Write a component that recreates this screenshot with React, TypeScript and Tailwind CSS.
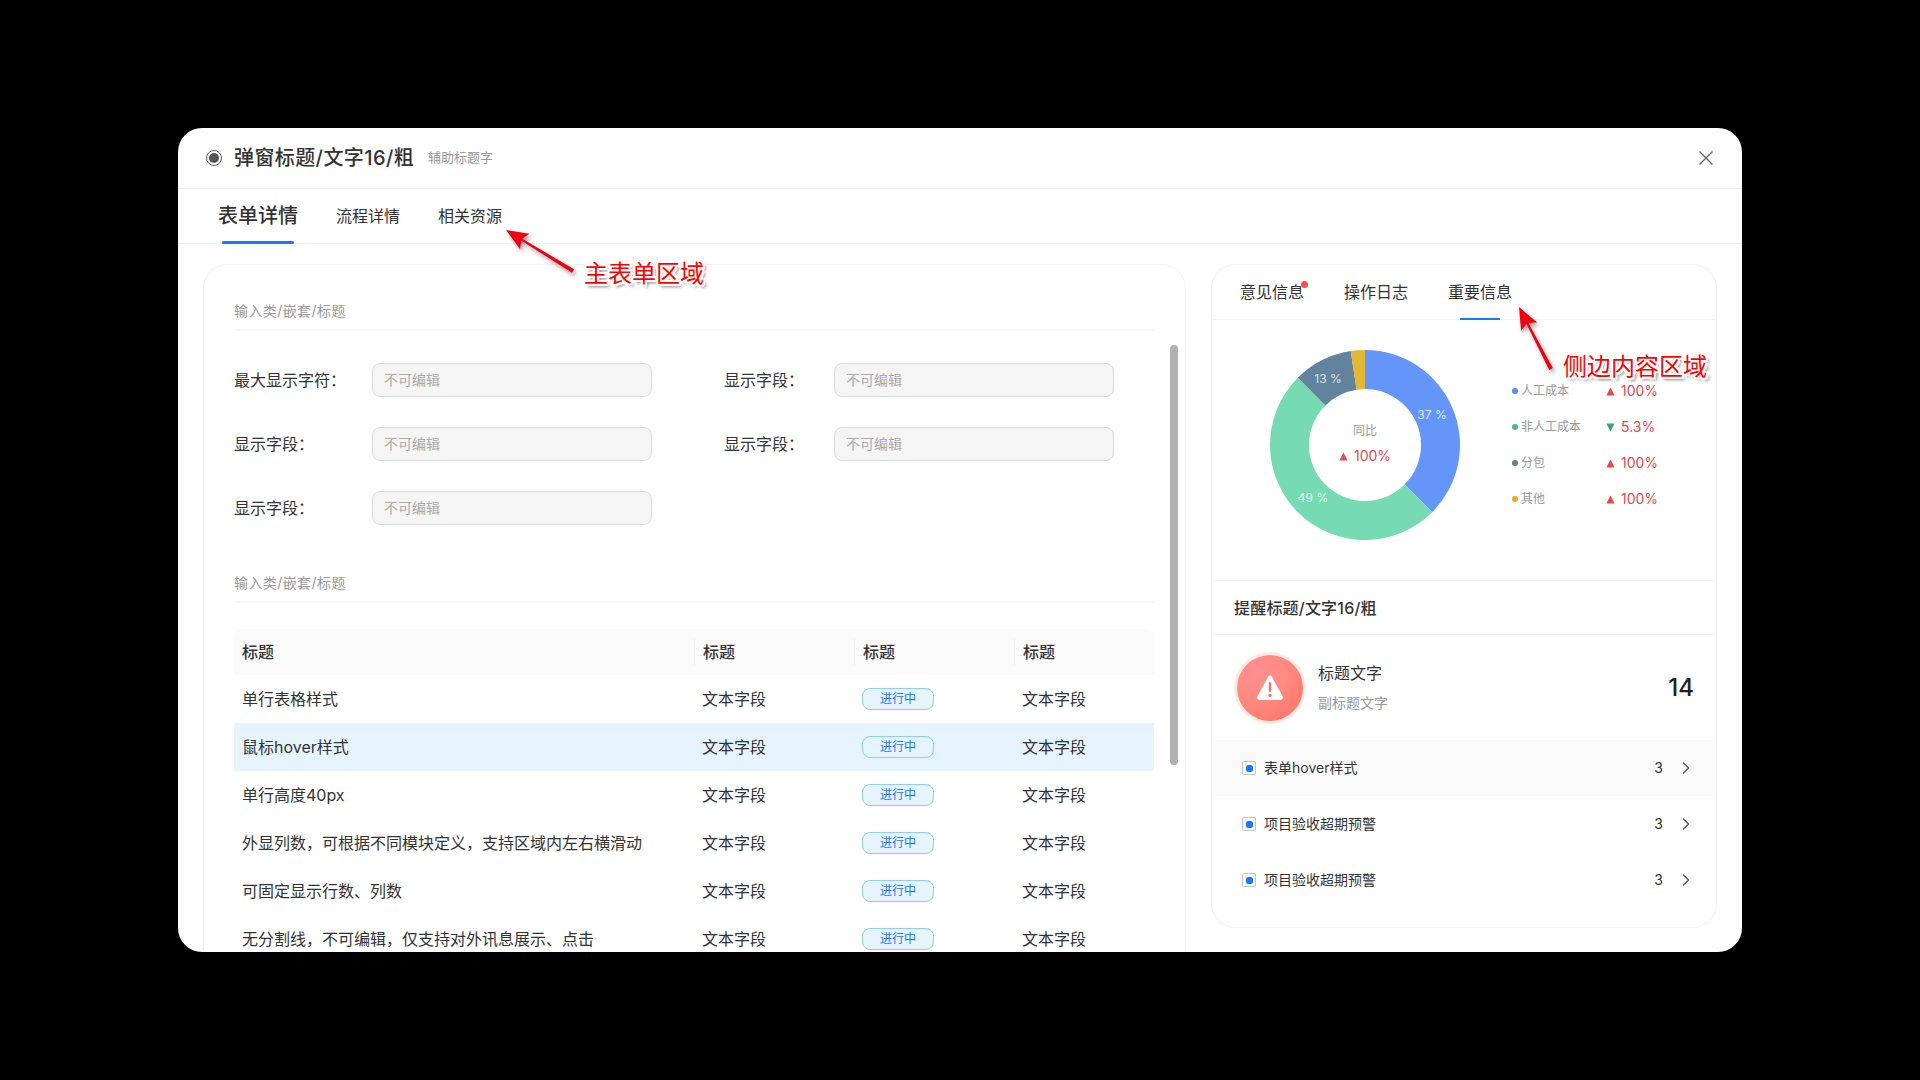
import { ChevronRight } from 'lucide-react';

const FONT = "font-['Inter','Noto_Sans_CJK_SC',sans-serif]";

const rows = [
  '单行表格样式',
  '鼠标hover样式',
  '单行高度40px',
  '外显列数\uFF0C可根据不同模块定义\uFF0C支持区域内左右横滑动',
  '可固定显示行数、列数',
  '无分割线\uFF0C不可编辑\uFF0C仅支持对外讯息展示、点击',
];

const legend = [
  { name: '人工成本', dot: 'bg-[#4f8ff7]', value: '100%', up: true },
  { name: '非人工成本', dot: 'bg-[#4fb98a]', value: '5.3%', up: false },
  { name: '分包', dot: 'bg-[#5d7f97]', value: '100%', up: true },
  { name: '其他', dot: 'bg-[#f5a623]', value: '100%', up: true },
];

// donut slice between two fractions of the circle, starting at 12 o'clock
function slice(from: number, to: number, R = 95, r = 56, c = 95) {
  const pt = (f: number, rad: number) => {
    const a = f * 2 * Math.PI;
    return `${(c + rad * Math.sin(a)).toFixed(2)} ${(c - rad * Math.cos(a)).toFixed(2)}`;
  };
  const large = to - from > 0.5 ? 1 : 0;
  return `M${pt(from, R)} A${R} ${R} 0 ${large} 1 ${pt(to, R)} L${pt(to, r)} A${r} ${r} 0 ${large} 0 ${pt(from, r)} Z`;
}

function Tri({ up = true }: { up?: boolean }) {
  return (
    <svg width="9" height="9" viewBox="0 0 9 9" className="shrink-0">
      {up ? <path d="M4.5 0.5 L8.6 8.5 L0.4 8.5 Z" fill="#e5484d" /> : <path d="M0.4 0.5 L8.6 0.5 L4.5 8.5 Z" fill="#3aa76d" />}
    </svg>
  );
}

function SectionTitle({ text, className }: { text: string; className?: string }) {
  return (
    <div className={`h-[34px] border-b-2 border-[#f7f7fb] text-sm leading-7 tracking-[0.4px] text-[#999] ${className ?? ''}`}>{text}</div>
  );
}

function Field({ label, width }: { label: string; width: string }) {
  return (
    <div className="flex h-[34px] items-center">
      <div className={`${width} text-base text-[#333]`}>{label}{'\uFF1A'}</div>
      <div className="flex h-[34px] w-[280px] items-center rounded-lg border border-[#dcdcdc] bg-[#f5f5f5] px-[11px] text-sm text-[#aaa]">
        不可编辑
      </div>
    </div>
  );
}

function AlertRow({ text, hover }: { text: string; hover?: boolean }) {
  return (
    <div className={`flex h-14 items-center pl-[30px] pr-5 text-sm text-[#333] ${hover ? 'bg-[#fafafa]' : ''}`}>
      <div className="flex h-[14px] w-[14px] items-center justify-center rounded-[2px] border border-[#c4c4cc] bg-white">
        <div className="h-[7px] w-[7px] rounded-[2.5px] bg-[#1677ff]" />
      </div>
      <div className="ml-2 flex-1">{text}</div>
      <div className="mr-[13px]">3</div>
      <ChevronRight size={20} strokeWidth={1.5} className="text-[#555]" />
    </div>
  );
}

function Callout({ className, children }: { className: string; children: string }) {
  return (
    <div
      className={`absolute whitespace-nowrap text-2xl leading-8 text-[#ff0000] [text-shadow:1px_0_0_#fff,-1px_0_0_#fff,0_1px_0_#fff,0_-1px_0_#fff,2px_2px_0_#fff,-2px_-2px_0_#fff,2px_-2px_0_#fff,-2px_2px_0_#fff,2px_0_0_#fff,-2px_0_0_#fff,0_2px_0_#fff,0_-2px_0_#fff,3px_3px_3px_rgba(0,0,0,0.55),0_0_4px_rgba(0,0,0,0.3)] ${className}`}
    >
      {children}
    </div>
  );
}

function Arrow({ x1, y1, x2, y2 }: { x1: number; y1: number; x2: number; y2: number }) {
  // coordinates are dialog-relative; the arrow head sits at x2,y2
  const a = Math.atan2(y2 - y1, x2 - x1);
  const len = 22;
  const wing = 9;
  const bx = x2 - len * Math.cos(a);
  const by = y2 - len * Math.sin(a);
  const nx = -Math.sin(a);
  const ny = Math.cos(a);
  const nb = `${bx + 4 * Math.cos(a)},${by + 4 * Math.sin(a)}`;
  const head = `${x2},${y2} ${bx + nx * wing},${by + ny * wing} ${nb} ${bx - nx * wing},${by - ny * wing}`;
  return (
    <g className="drop-shadow-[2px_3px_2px_rgba(0,0,0,0.4)]">
      <polygon
        points={`${x1 + nx * 2},${y1 + ny * 2} ${x1 - nx * 2},${y1 - ny * 2} ${bx + 6 * Math.cos(a) - nx},${by + 6 * Math.sin(a) - ny} ${bx + 6 * Math.cos(a) + nx},${by + 6 * Math.sin(a) + ny}`}
        fill="#f00011"
      />
      <polygon points={head} fill="#f00011" />
    </g>
  );
}

export default function App() {
  return (
    <div className={`flex h-screen w-full items-center justify-center bg-black ${FONT}`}>
      <div className="relative flex h-[824px] w-[1564px] flex-col overflow-hidden rounded-3xl bg-white text-[#333]">
        {/* header */}
        <div className="flex h-[61px] shrink-0 items-center border-b border-[#f2f2f7] pl-[28px] pr-[28px]">
          <div className="flex h-4 w-4 items-center justify-center rounded-full border border-[#555]">
            <div className="h-[10px] w-[10px] rounded-full bg-[#555]" />
          </div>
          <div className="ml-[12px] text-xl font-medium tracking-[0.4px] text-[#333]">弹窗标题/文字16/粗</div>
          <div className="ml-[14px] text-[13px] text-[#999]">辅助标题字</div>
          <svg width="16" height="16" viewBox="0 0 16 16" className="ml-auto" fill="none" stroke="#666" strokeWidth="1.4">
            <path d="M1.5 1.5 L14.5 14.5 M14.5 1.5 L1.5 14.5" />
          </svg>
        </div>

        {/* tabs */}
        <div className="flex h-[55px] shrink-0 items-center gap-[38px] border-b border-[#f2f2f7] pl-10">
          <div className="relative flex h-full items-center text-xl font-medium text-[#333]">
            表单详情
            <div className="absolute bottom-[-1px] left-1 h-[3px] w-[72px] rounded-sm bg-[#1677ff]" />
          </div>
          <div className="text-base text-[#333]">流程详情</div>
          <div className="text-base text-[#333]">相关资源</div>
        </div>

        {/* body */}
        <div className="flex min-h-0 flex-1 gap-[25px] overflow-hidden pl-[25px] pr-[25px] pt-5">
          {/* main form */}
          <div className="relative h-[720px] w-[983px] shrink-0 rounded-3xl border border-[#f2f2f7] px-[30px] pt-8">
            <SectionTitle text="输入类/嵌套/标题" />
            <div className="mt-8 flex flex-col gap-[30px]">
              <div className="flex gap-[72px]">
                <Field label="最大显示字符" width="w-[138px]" />
                <Field label="显示字段" width="w-[110px]" />
              </div>
              <div className="flex gap-[72px]">
                <Field label="显示字段" width="w-[138px]" />
                <Field label="显示字段" width="w-[110px]" />
              </div>
              <Field label="显示字段" width="w-[138px]" />
            </div>

            <SectionTitle text="输入类/嵌套/标题" className="mt-[44px]" />

            <div className="mt-[26px] w-[920px]">
              <div className="grid h-[46px] grid-cols-[460px_160px_160px_140px] items-center rounded-t-lg bg-[#fafafa] text-base font-medium">
                <div className="px-2">标题</div>
                <div className="border-l border-[#eeeeee] px-2 leading-[26px]">标题</div>
                <div className="border-l border-[#eeeeee] px-2 leading-[26px]">标题</div>
                <div className="border-l border-[#eeeeee] px-2 leading-[26px]">标题</div>
              </div>
              {rows.map((r, i) => (
                <div
                  key={r}
                  className={`grid h-12 grid-cols-[460px_160px_160px_140px] items-center text-base ${i === 1 ? 'bg-[#e6f4ff]' : ''}`}
                >
                  <div className="px-2">{r}</div>
                  <div className="px-2">文本字段</div>
                  <div className="px-2">
                    <div className="flex h-[22px] w-[72px] items-center justify-center rounded-lg border border-[#91caff] bg-[#e6f4ff] text-xs text-[#1677ff]">
                      进行中
                    </div>
                  </div>
                  <div className="px-2">文本字段</div>
                </div>
              ))}
            </div>

            {/* scrollbar */}
            <div className="absolute left-[966px] top-[80px] h-[420px] w-2 rounded bg-[#b0b0b0]" />
          </div>

          {/* side panel */}
          <div className="h-[664px] w-[506px] shrink-0 overflow-hidden rounded-3xl border border-[#f2f2f7]">
            <div className="flex h-[55px] items-center gap-[40px] border-b border-[#f2f2f7] pl-[28px] text-base">
              <div className="relative">
                意见信息
                <div className="absolute right-[-4px] top-[1px] h-[7px] w-[7px] rounded-full bg-[#ff4d4f]" />
              </div>
              <div>操作日志</div>
              <div className="relative flex h-full items-center">
                重要信息
                <div className="absolute bottom-[-1px] left-3 h-[2px] w-10 bg-[#1677ff]" />
              </div>
            </div>

            <div className="flex h-[261px] items-start border-b border-[#f2f2f7] pl-[58px] pt-[30px]">
              <div className="relative h-[190px] w-[190px] shrink-0">
                <svg width="190" height="190" viewBox="0 0 190 190" className="block">
                  <path d={slice(0, 0.375)} fill="#6495f9" />
                  <path d={slice(0.375, 0.875)} fill="#76dab2" />
                  <path d={slice(0.875, 0.976)} fill="#61839b" />
                  <path d={slice(0.976, 1)} fill="#e3b735" />
                  <g fontSize="12" fill="#ffffff" fillOpacity="0.8" textAnchor="middle">
                    <text x="162" y="69">37 %</text>
                    <text x="43" y="152">49 %</text>
                    <text x="58" y="33">13 %</text>
                  </g>
                </svg>
                <div className="absolute left-0 right-0 top-[72px] flex flex-col items-center gap-[7px]">
                  <div className="text-xs leading-[18px] text-[#999]">同比</div>
                  <div className="flex items-center gap-[6px] text-sm leading-[18px] text-[#e5484d]">
                    <Tri />
                    100%
                  </div>
                </div>
              </div>
              <div className="ml-[52px] mt-[23px] flex flex-col">
                {legend.map((l) => (
                  <div key={l.name} className="flex h-9 items-center">
                    <div className={`h-[6px] w-[6px] rounded-full ${l.dot}`} />
                    <div className="ml-[3px] w-[85px] text-xs text-[#999]">{l.name}</div>
                    <Tri up={l.up} />
                    <div className="ml-[6px] text-sm text-[#e5484d]">{l.value}</div>
                  </div>
                ))}
              </div>
            </div>

            <div className="flex h-[54px] items-center border-b border-[#f2f2f7] pl-[22px] text-base font-medium tracking-[0.2px]">
              提醒标题/文字16/粗
            </div>

            <div className="flex h-[105px] items-center pl-[25px] pr-[22px]">
              <div className="flex h-[66px] w-[66px] items-center justify-center rounded-full bg-[radial-gradient(circle_at_30%_25%,#ff8f94_0%,#ff8a80_45%,#ff6d60_100%)] shadow-[0_0_0_3px_#fbeae4]">
                <svg width="28" height="28" viewBox="0 0 28 28">
                  <path d="M14 1.5 C14.8 1.5 15.4 1.9 15.8 2.6 L26.6 22.6 C27.4 24.1 26.4 26 24.6 26 L3.4 26 C1.6 26 0.6 24.1 1.4 22.6 L12.2 2.6 C12.6 1.9 13.2 1.5 14 1.5 Z" fill="#ffffff" />
                  <rect x="12.8" y="8" width="2.4" height="10" rx="1.2" fill="#ff6b63" />
                  <circle cx="14" cy="21.4" r="1.6" fill="#ff6b63" />
                </svg>
              </div>
              <div className="ml-[15px] flex flex-col gap-[9px]">
                <div className="text-base leading-[22px] text-[#333]">标题文字</div>
                <div className="text-sm leading-5 text-[#999]">副标题文字</div>
              </div>
              <div className="ml-auto text-2xl font-medium text-[#222]">14</div>
            </div>

            <AlertRow text="表单hover样式" hover />
            <AlertRow text="项目验收超期预警" />
            <AlertRow text="项目验收超期预警" />
          </div>
        </div>

        {/* review annotations laid over the dialog */}
        <svg className="pointer-events-none absolute left-0 top-0" width="1564" height="824">
          <Arrow x1={395} y1={143} x2={328} y2={102} />
          <Arrow x1={1373} y1={241} x2={1341} y2={179} />
        </svg>
        <Callout className="left-[406px] top-[130px]">主表单区域</Callout>
        <Callout className="left-[1385px] top-[223px]">侧边内容区域</Callout>
      </div>
    </div>
  );
}
